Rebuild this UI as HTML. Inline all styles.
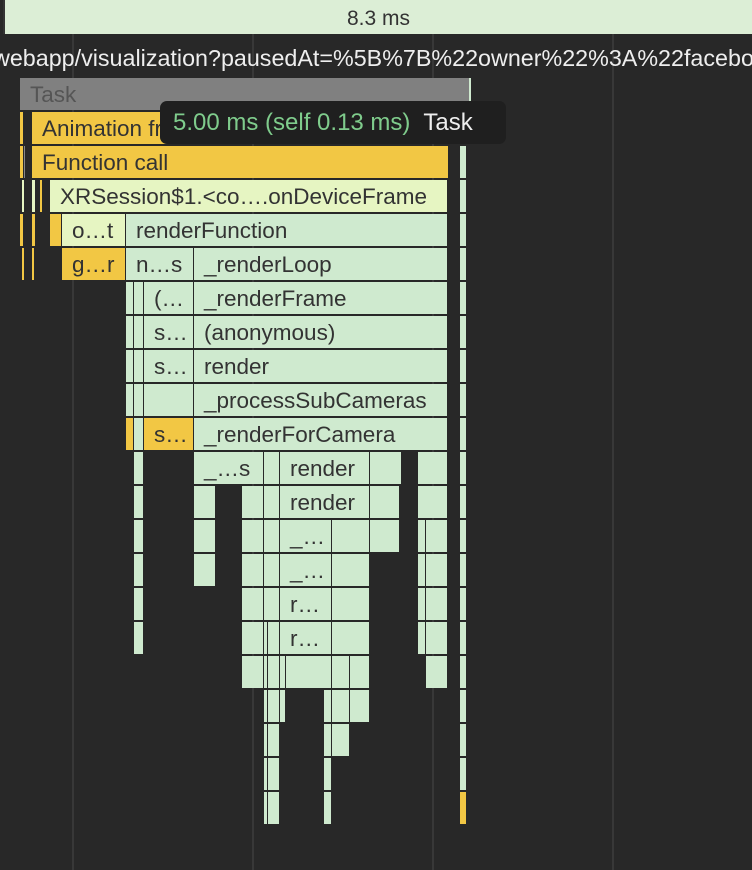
<!DOCTYPE html>
<html><head><style>
body{margin:0;width:752px;height:870px;background:#282828;overflow:hidden;position:relative;font-family:"Liberation Sans",sans-serif}
.g{position:absolute;top:34px;bottom:0;width:2px;background:#383838}
.b{position:absolute;height:32px;background:#cfeacf;color:#333;font-size:22.5px;line-height:33px;text-indent:10px;white-space:nowrap;overflow:hidden}
.y{background:#f2c744}.p{background:#e6f5c2}
</style></head><body>
<div class="g" style="left:72px"></div><div class="g" style="left:252px"></div><div class="g" style="left:432px"></div><div class="g" style="left:612px"></div>
<div style="position:absolute;left:3px;top:0;width:749px;height:34px;background:#dceed6;color:#333;font-size:21px;line-height:38px;text-align:center;border-left:2px solid #333;box-sizing:border-box">8.3 ms</div>
<div style="position:absolute;left:-7px;top:45px;color:#eee;font-size:23.3px;white-space:nowrap">webapp/visualization?pausedAt=%5B%7B%22owner%22%3A%22facebo</div>
<div class="b" style="left:20px;top:78px;width:449px;background:#808080;color:#555">Task</div>
<div class="b" style="left:469px;top:78px;width:2px"></div>
<div class="b y" style="left:20px;top:112px;width:3px"></div>
<div class="b y" style="left:32px;top:112px;width:416px">Animation frame fired</div>
<div class="b" style="left:460px;top:112px;width:6px"></div>
<div class="b y" style="left:20px;top:146px;width:3px"></div>
<div class="b" style="left:24px;top:146px;width:1px;background:#888"></div>
<div class="b y" style="left:32px;top:146px;width:416px">Function call</div>
<div class="b" style="left:460px;top:146px;width:6px"></div>
<div class="b p" style="left:22px;top:180px;width:2px"></div>
<div class="b p" style="left:32px;top:180px;width:3px"></div>
<div class="b y" style="left:40px;top:180px;width:2px"></div>
<div class="b p" style="left:50px;top:180px;width:397px">XRSession$1.&lt;co….onDeviceFrame</div>
<div class="b" style="left:460px;top:180px;width:6px"></div>
<div class="b y" style="left:20px;top:214px;width:3px"></div>
<div class="b y" style="left:32px;top:214px;width:3px"></div>
<div class="b y" style="left:50px;top:214px;width:11px"></div>
<div class="b p" style="left:62px;top:214px;width:63px">o…t</div>
<div class="b" style="left:126px;top:214px;width:321px">renderFunction</div>
<div class="b" style="left:460px;top:214px;width:6px"></div>
<div class="b y" style="left:22px;top:248px;width:2px"></div>
<div class="b y" style="left:32px;top:248px;width:2px"></div>
<div class="b y" style="left:62px;top:248px;width:63px">g…r</div>
<div class="b" style="left:126px;top:248px;width:67px">n…s</div>
<div class="b" style="left:194px;top:248px;width:253px">_renderLoop</div>
<div class="b" style="left:460px;top:248px;width:6px"></div>
<div class="b" style="left:126px;top:282px;width:7px"></div><div class="b" style="left:134px;top:282px;width:9px"></div><div class="b" style="left:144px;top:282px;width:49px">(…</div><div class="b" style="left:194px;top:282px;width:253px">_renderFrame</div><div class="b" style="left:460px;top:282px;width:6px"></div>
<div class="b" style="left:126px;top:316px;width:7px"></div><div class="b" style="left:134px;top:316px;width:9px"></div><div class="b" style="left:144px;top:316px;width:49px">s…</div><div class="b" style="left:194px;top:316px;width:253px">(anonymous)</div><div class="b" style="left:460px;top:316px;width:6px"></div>
<div class="b" style="left:126px;top:350px;width:7px"></div><div class="b" style="left:134px;top:350px;width:9px"></div><div class="b" style="left:144px;top:350px;width:49px">s…</div><div class="b" style="left:194px;top:350px;width:253px">render</div><div class="b" style="left:460px;top:350px;width:6px"></div>
<div class="b" style="left:126px;top:384px;width:7px"></div><div class="b" style="left:134px;top:384px;width:9px"></div><div class="b" style="left:144px;top:384px;width:49px"></div><div class="b" style="left:194px;top:384px;width:253px">_processSubCameras</div><div class="b" style="left:460px;top:384px;width:6px"></div>
<div class="b y" style="left:126px;top:418px;width:7px"></div><div class="b" style="left:134px;top:418px;width:9px"></div><div class="b y" style="left:144px;top:418px;width:49px">s…</div><div class="b" style="left:194px;top:418px;width:253px">_renderForCamera</div><div class="b" style="left:460px;top:418px;width:6px"></div>
<div class="b" style="left:134px;top:452px;width:9px"></div><div class="b" style="left:194px;top:452px;width:69px">_…s</div><div class="b" style="left:264px;top:452px;width:15px"></div><div class="b" style="left:280px;top:452px;width:89px">render</div><div class="b" style="left:370px;top:452px;width:31px"></div><div class="b" style="left:418px;top:452px;width:29px"></div><div class="b" style="left:460px;top:452px;width:6px"></div>
<div class="b" style="left:134px;top:486px;width:9px"></div><div class="b" style="left:194px;top:486px;width:21px"></div><div class="b" style="left:242px;top:486px;width:21px"></div><div class="b" style="left:264px;top:486px;width:15px"></div><div class="b" style="left:280px;top:486px;width:89px">render</div><div class="b" style="left:370px;top:486px;width:29px"></div><div class="b" style="left:418px;top:486px;width:29px"></div><div class="b" style="left:460px;top:486px;width:6px"></div>
<div class="b" style="left:134px;top:520px;width:9px"></div><div class="b" style="left:194px;top:520px;width:21px"></div><div class="b" style="left:242px;top:520px;width:21px"></div><div class="b" style="left:264px;top:520px;width:15px"></div><div class="b" style="left:280px;top:520px;width:51px">_…</div><div class="b" style="left:332px;top:520px;width:37px"></div><div class="b" style="left:370px;top:520px;width:29px"></div><div class="b" style="left:418px;top:520px;width:7px"></div><div class="b" style="left:426px;top:520px;width:21px"></div><div class="b" style="left:460px;top:520px;width:6px"></div>
<div class="b" style="left:134px;top:554px;width:9px"></div><div class="b" style="left:194px;top:554px;width:21px"></div><div class="b" style="left:242px;top:554px;width:21px"></div><div class="b" style="left:264px;top:554px;width:15px"></div><div class="b" style="left:280px;top:554px;width:51px">_…</div><div class="b" style="left:332px;top:554px;width:37px"></div><div class="b" style="left:418px;top:554px;width:7px"></div><div class="b" style="left:426px;top:554px;width:21px"></div><div class="b" style="left:460px;top:554px;width:6px"></div>
<div class="b" style="left:134px;top:588px;width:9px"></div><div class="b" style="left:242px;top:588px;width:21px"></div><div class="b" style="left:264px;top:588px;width:15px"></div><div class="b" style="left:280px;top:588px;width:51px">r…</div><div class="b" style="left:332px;top:588px;width:37px"></div><div class="b" style="left:418px;top:588px;width:7px"></div><div class="b" style="left:426px;top:588px;width:21px"></div><div class="b" style="left:460px;top:588px;width:6px"></div>
<div class="b" style="left:134px;top:622px;width:9px"></div><div class="b" style="left:242px;top:622px;width:21px"></div><div class="b" style="left:264px;top:622px;width:3px"></div><div class="b" style="left:268px;top:622px;width:11px"></div><div class="b" style="left:280px;top:622px;width:51px">r…</div><div class="b" style="left:332px;top:622px;width:37px"></div><div class="b" style="left:418px;top:622px;width:7px"></div><div class="b" style="left:426px;top:622px;width:21px"></div><div class="b" style="left:460px;top:622px;width:6px"></div>
<div class="b" style="left:242px;top:656px;width:21px"></div><div class="b" style="left:264px;top:656px;width:3px"></div><div class="b" style="left:268px;top:656px;width:11px"></div><div class="b" style="left:280px;top:656px;width:5px"></div><div class="b" style="left:286px;top:656px;width:45px"></div><div class="b" style="left:332px;top:656px;width:17px"></div><div class="b" style="left:350px;top:656px;width:19px"></div><div class="b" style="left:426px;top:656px;width:21px"></div><div class="b" style="left:460px;top:656px;width:6px"></div>
<div class="b" style="left:264px;top:690px;width:3px"></div><div class="b" style="left:268px;top:690px;width:11px"></div><div class="b" style="left:280px;top:690px;width:5px"></div><div class="b" style="left:324px;top:690px;width:7px"></div><div class="b" style="left:332px;top:690px;width:17px"></div><div class="b" style="left:350px;top:690px;width:19px"></div><div class="b" style="left:460px;top:690px;width:6px"></div>
<div class="b" style="left:264px;top:724px;width:3px"></div><div class="b" style="left:268px;top:724px;width:11px"></div><div class="b" style="left:324px;top:724px;width:7px"></div><div class="b" style="left:332px;top:724px;width:17px"></div><div class="b" style="left:460px;top:724px;width:6px"></div>
<div class="b" style="left:264px;top:758px;width:3px"></div><div class="b" style="left:268px;top:758px;width:11px"></div><div class="b" style="left:324px;top:758px;width:7px"></div><div class="b" style="left:460px;top:758px;width:6px"></div>
<div class="b" style="left:264px;top:792px;width:3px"></div><div class="b" style="left:268px;top:792px;width:11px"></div><div class="b" style="left:324px;top:792px;width:7px"></div><div class="b y" style="left:460px;top:792px;width:6px"></div>
<div style="position:absolute;left:160px;top:101px;width:346px;height:43px;background:#1f1f1f;border-radius:7px;font-size:24px;line-height:44px;padding-left:13px;box-sizing:border-box;white-space:nowrap;overflow:hidden"><span style="color:#7fcc8c">5.00 ms (self 0.13 ms)</span><span style="color:#eee;margin-left:13px">Task</span></div>
</body></html>
